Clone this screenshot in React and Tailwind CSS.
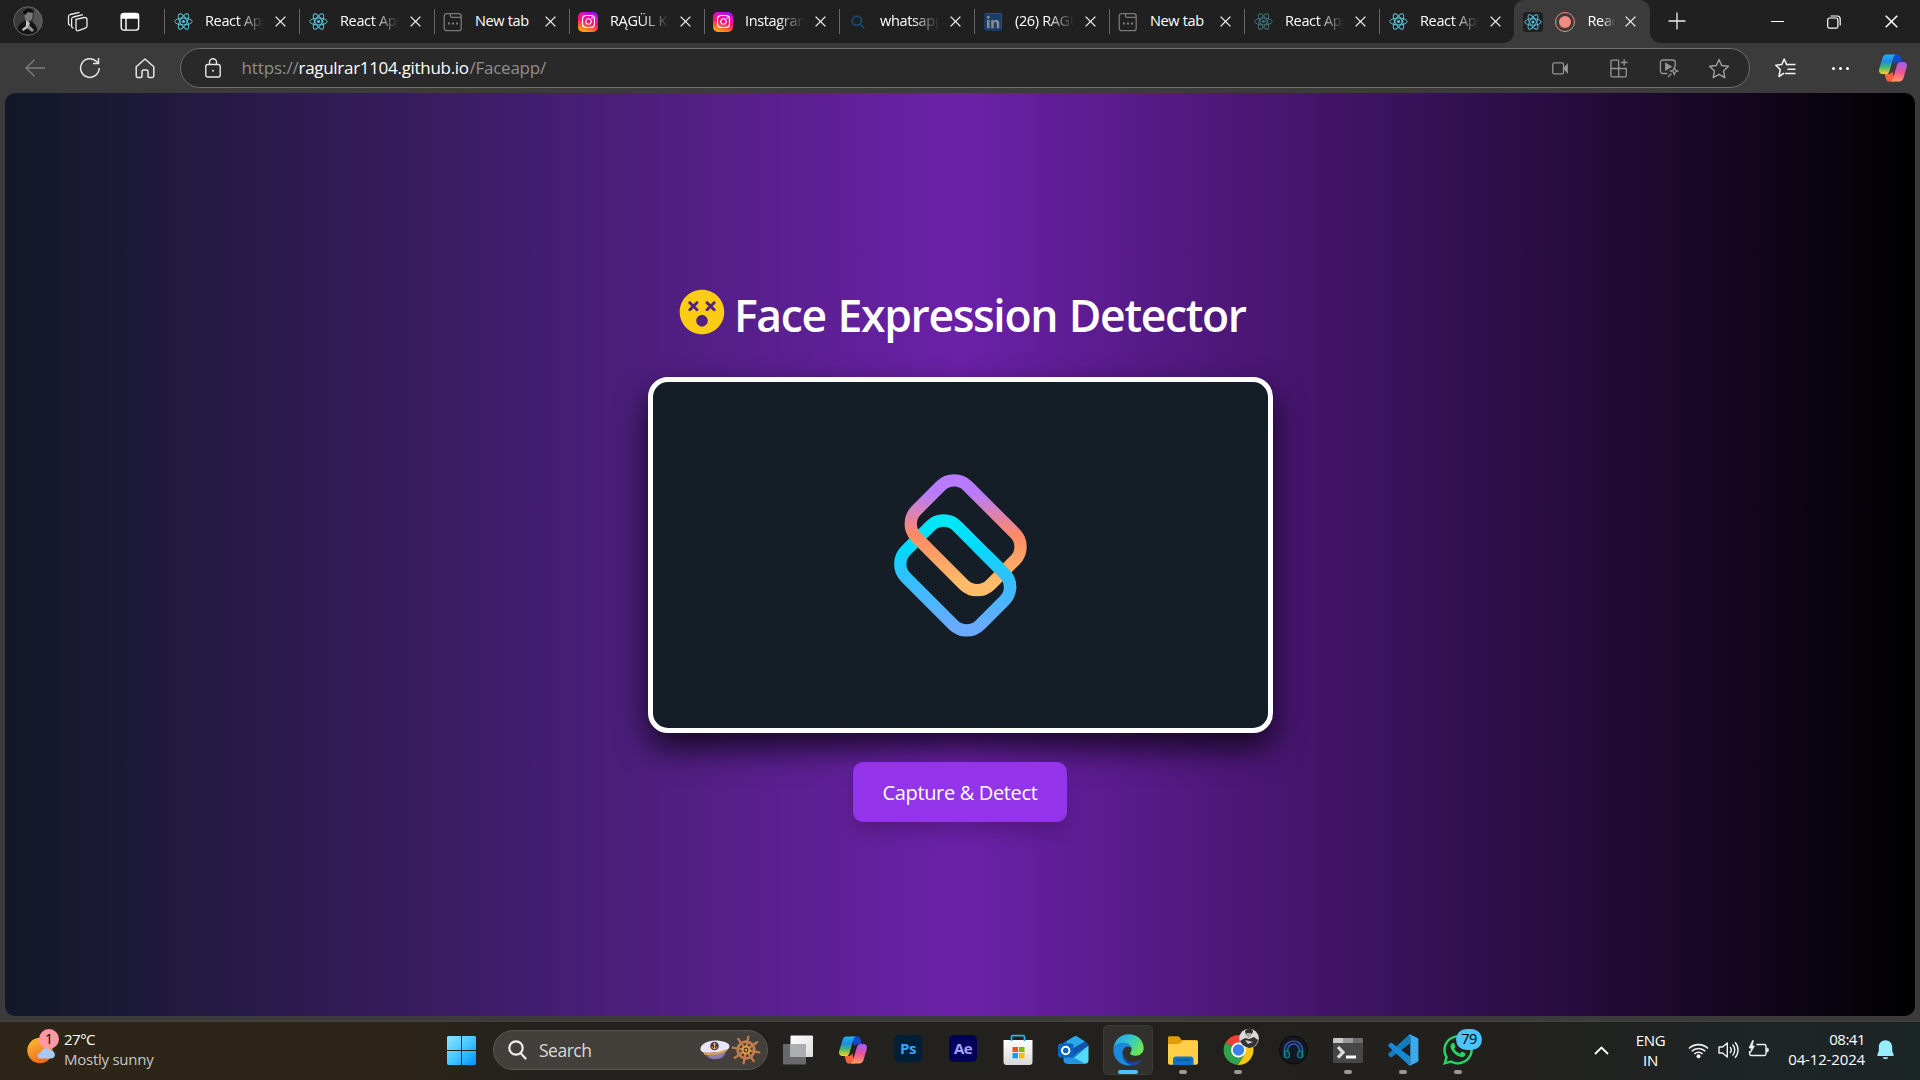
import React from "react";
import { FaDizzy, FaInstagram, FaLinkedin, FaWhatsapp } from "react-icons/fa";

function ReactLogo({ size = 19, dim = false }) {
  return (
    <svg width={size} height={size} viewBox="0 0 24 24" fill="none" stroke="#58c4dc" strokeWidth="1.25" className={dim ? "opacity-50" : ""}>
      <ellipse cx="12" cy="12" rx="11" ry="4.3" />
      <ellipse cx="12" cy="12" rx="11" ry="4.3" transform="rotate(60 12 12)" />
      <ellipse cx="12" cy="12" rx="11" ry="4.3" transform="rotate(120 12 12)" />
      <circle cx="12" cy="12" r="2" fill="#58c4dc" stroke="none" />
    </svg>
  );
}

function NewTabIcon() {
  return (
    <svg width="20" height="20" viewBox="0 0 20 20" fill="none" stroke="#7a7a7a" strokeWidth="1.3">
      <rect x="1.2" y="1.7" width="17" height="17" rx="2.5" />
      <path d="M7.5 1.7v2.2c0 .8.6 1.4 1.4 1.4h9.3" />
      <path d="M5 11.5h2M9 11.5h2M13 11.5h2" strokeWidth="1.8" />
    </svg>
  );
}

function InstagramIcon() {
  return (
    <span className="flex h-5 w-5 items-center justify-center rounded-[5px] bg-[linear-gradient(20deg,#ffc800_0%,#ff7a1c_22%,#ff0f6f_50%,#f20cc0_72%,#7a10ff_100%)]">
      <FaInstagram size={15} color="#fff" />
    </span>
  );
}

function SearchBlue() {
  return (
    <svg width="14" height="14" viewBox="0 0 14 14" fill="none" stroke="#174a78" strokeWidth="1.7">
      <circle cx="5.8" cy="5.8" r="4.6" />
      <path d="M9.2 9.2l4 4" />
    </svg>
  );
}

function CloseX({ size = 11, color = "#f2f2f2" }) {
  return (
    <svg width={size} height={size} viewBox="0 0 11 11" stroke={color} strokeWidth="1.3">
      <path d="M.6.6l9.8 9.8M10.4.6L.6 10.4" />
    </svg>
  );
}

const tabs = [
  { icon: <ReactLogo />, label: "React App" },
  { icon: <ReactLogo />, label: "React App" },
  { icon: <NewTabIcon />, label: "New tab" },
  { icon: <InstagramIcon />, label: "RĄGÜL KU" },
  { icon: <InstagramIcon />, label: "Instagram" },
  { icon: <SearchBlue />, label: "whatsapp" },
  { icon: <span className="flex h-[17px] w-[17px] items-center justify-center rounded-[2px] bg-[#848a90]"><FaLinkedin size={20} color="#173f68" className="shrink-0" /></span>, label: "(26) RAGUL" },
  { icon: <NewTabIcon />, label: "New tab" },
  { icon: <ReactLogo dim />, label: "React App" },
  { icon: <ReactLogo />, label: "React App" },
];

const FADE = "[mask-image:linear-gradient(to_right,#000_55%,transparent_100%)]";

function Tab({ icon, label }) {
  return (
    <div className="flex h-[43px] w-[135px] shrink-0 items-center">
      <span className="h-[25px] w-px bg-[#686868]" />
      <span className="ml-[8.5px] flex w-5 justify-center">{icon}</span>
      <span className={`mb-[2px] ml-[12px] w-[59px] overflow-hidden whitespace-nowrap text-[14.5px] leading-5 tracking-[-0.35px] text-white ${label === "New tab" ? "" : FADE}`}>{label}</span>
      <span className="ml-[10.5px]"><CloseX /></span>
    </div>
  );
}

function Slot({ className = "", children }) {
  return <div className={`flex h-full shrink-0 items-center justify-center ${className}`}>{children}</div>;
}

function TabBar() {
  return (
    <div className="flex h-[43px] bg-[#202020]">
      <div className="flex w-[163.5px] shrink-0 items-center">
        <svg width="30" height="30" viewBox="0 0 30 30" className="mb-[2px] ml-[13px]">
          <defs><clipPath id="avatar"><circle cx="15" cy="15" r="14.3" /></clipPath></defs>
          <g clipPath="url(#avatar)">
            <rect width="30" height="30" fill="#3a3a3a" />
            <path d="M22 0h8v30h-7l-3-14z" fill="#555" />
            <path d="M3 30c0-8 4-14 9-15l7 1c4 2 6 7 6 14z" fill="#151515" />
            <path d="M11 5c2-3 8-3 9 1l-1 7-4 3-3-3z" fill="#777" />
            <path d="M10 7c1-6 10-6 11 0l-6-1-3 3z" fill="#0c0c0c" />
            <path d="M13 14l4 3-2 5-5 3-1-2 4-3z" fill="#c0c0c0" />
            <path d="M16 19l5 5-2 2-5-4z" fill="#929292" />
          </g>
          <circle cx="15" cy="15" r="14.2" fill="none" stroke="#676767" />
        </svg>
        <svg width="22" height="22" viewBox="0 0 22 22" fill="none" stroke="#ececec" strokeWidth="1.3" className="ml-[24px]">
          <path d="M9 8.3l8.2-1.8c1.5-.3 2.8.6 2.8 2v6.6c0 1-.7 1.7-1.6 2l-7 2.6c-1.3.4-2.4-.3-2.4-1.6z" />
          <path d="M6.5 16.8c-1.2.1-1.9-.6-1.9-1.7V8.2c0-1 .7-1.9 1.7-2.2l9.6-2.3M3.5 14.2c-1.2.1-2-.6-2-1.7V5.7c0-1.1.7-1.9 1.7-2.2l9.3-2.2" />
        </svg>
        <svg width="20" height="20" viewBox="0 0 20 20" fill="none" stroke="#fff" strokeWidth="1.4" className="ml-[31px]">
          <rect x="1.2" y="1.5" width="17.4" height="16.6" rx="2.5" />
          <path d="M1.5 2.5h16.8v3.5H1.5zM6 6v12" fill="#fff" />
        </svg>
      </div>
      {tabs.map((t, i) => <Tab key={i} {...t} />)}
      <div className="relative flex w-[136px] shrink-0 items-center rounded-t-[10px] bg-[#3b3b3b]">
        <span className="absolute bottom-0 -left-[10px] h-[10px] w-[10px] bg-[radial-gradient(circle_at_0_0,#202020_9.5px,#3b3b3b_10px)]" />
        <span className="absolute -right-[10px] bottom-0 h-[10px] w-[10px] bg-[radial-gradient(circle_at_100%_0,#202020_9.5px,#3b3b3b_10px)]" />
        <span className="ml-[9px] flex h-5 w-5 items-center justify-center rounded-[3px] bg-[#202020]"><ReactLogo size={18} /></span>
        <span className="ml-[12px] flex h-5 w-5 items-center justify-center rounded-full border-[1.5px] border-[#f28b82]"><span className="h-3 w-3 rounded-full bg-[#f28b82]" /></span>
        <span className="mb-[2px] ml-[13px] w-[27px] overflow-hidden whitespace-nowrap text-[14.5px] leading-5 tracking-[-0.35px] text-white [mask-image:linear-gradient(to_right,#000_55%,transparent_100%)]">React</span>
        <span className="ml-[10px]"><CloseX /></span>
      </div>
      <Slot className="w-[54px] pb-[1px]">
        <svg width="18" height="18" viewBox="0 0 18 18" stroke="#eee" strokeWidth="1.3"><path d="M9 .5v17M.5 9h17" /></svg>
      </Slot>
      <div className="ml-auto flex">
        <Slot className="w-[55px]"><span className="h-px w-[13px] bg-white" /></Slot>
        <Slot className="w-[57px]">
          <svg width="14" height="14" viewBox="0 0 14 14" fill="none" stroke="#fff" strokeWidth="1.2">
            <rect x=".7" y="3" width="10.2" height="10.2" rx="1.8" />
            <path d="M3.5 1h6.700c1.700 0 3 1.300 3 3v6.500" />
          </svg>
        </Slot>
        <Slot className="w-[58px]"><CloseX size={13} color="#fff" /></Slot>
      </div>
    </div>
  );
}

function CopilotIcon() {
  return (
    <svg width="30" height="30" viewBox="0 0 30 30">
      <defs>
        <linearGradient id="cpA" x1="0" y1="0" x2="0" y2="1"><stop offset="0" stopColor="#1fb4f5" /><stop offset=".35" stopColor="#2088e6" /><stop offset=".65" stopColor="#45b873" /><stop offset="1" stopColor="#ffd21f" /></linearGradient>
        <linearGradient id="cpB" x1=".3" y1="0" x2=".2" y2="1"><stop offset="0" stopColor="#a35cf0" /><stop offset=".5" stopColor="#ef5593" /><stop offset="1" stopColor="#ffa35c" /></linearGradient>
      </defs>
      <path d="M13 1.5h6.500c1.600 0 2.400 1 2.900 2.600L24 9h-4c-2 0-3 .8-3.600 2.500z" fill="#1547d1" />
      <path d="M17 28.500h-6c-1.600 0-2.500-1-3-2.600L6.500 21H11c1.600 0 2.600-1 3.200-2.700z" fill="#f8633f" />
      <path d="M8.500 1.500H18c-1.500.5-2.200 1.700-2.700 3.400l-4 13.500c-.5 1.700-1.600 2.600-3.300 2.600H4.500C1.700 21 .5 18.600 1.200 16L4.500 5C5.200 2.700 6.400 1.500 8.500 1.500z" fill="url(#cpA)" />
      <path d="M21.500 28.500H12.500c1.500-.5 2.100-1.700 2.600-3.400l4-13.500C19.600 9.900 20.700 9 22.400 9h3.100c2.800 0 4 2.400 3.300 5l-3.300 11c-.7 2.300-1.900 3.500-4 3.500z" fill="url(#cpB)" />
    </svg>
  );
}

function Toolbar() {
  return (
    <div className="flex h-[50px] items-center bg-[#3b3b3b] pl-[7.5px]">
      <Slot className="w-[55px]">
        <svg width="20" height="18" viewBox="0 0 20 18" fill="none" stroke="#7c7c7c" strokeWidth="1.5"><path d="M20 9H1M9.500.7L1 9l8.500 8.300" /></svg>
      </Slot>
      <Slot className="w-[55px]">
        <svg width="22" height="22" viewBox="0 0 22 22" fill="none" stroke="#e6e6e6" strokeWidth="1.5"><path d="M20.200 11a9.300 9.300 0 1 1-2.700-6.500l1.700 1.700M19.500 1v5.500H14" /></svg>
      </Slot>
      <Slot className="w-[55px]">
        <svg width="20" height="21" viewBox="0 0 20 21" fill="none" stroke="#e6e6e6" strokeWidth="1.5" strokeLinejoin="round"><path d="M1.200 8.800L10 1l8.800 7.800V18c0 .9-.5 1.400-1.400 1.400h-3.200c-.8 0-1.200-.5-1.200-1.200v-4.700c0-.9-.5-1.400-1.400-1.400H8.400c-.9 0-1.400.5-1.400 1.400v4.700c0 .7-.4 1.200-1.200 1.200H2.600c-.9 0-1.400-.5-1.400-1.400z" /></svg>
      </Slot>
      <div className="ml-[7.5px] flex h-10 w-[1570px] shrink-0 items-center rounded-full border border-[#6c6c6c] bg-[#292929]">
        <svg width="16" height="20" viewBox="0 0 16 20" fill="none" stroke="#e6e6e6" strokeWidth="1.4" className="mb-[1px] ml-[23.5px]">
          <rect x=".8" y="6.500" width="14.400" height="12.500" rx="2" /><path d="M4.500 6.500V4.300a3.500 3.500 0 0 1 7 0v2.200" /><circle cx="8" cy="12.700" r="1" fill="#e6e6e6" stroke="none" />
        </svg>
        <span className="ml-[21px] flex whitespace-nowrap text-[17px] leading-6 text-[#8f8f8f]">
          <span className="w-[57px] tracking-[-0.1px]">https://</span>
          <span className="w-[171px] tracking-[-0.3px] text-white">ragulrar1104.github.io</span>
          <span className="tracking-[-0.25px]">/Faceapp/</span>
        </span>
        <div className="ml-auto flex h-full pr-[5px]">
          <Slot className="w-[67px]">
            <svg width="16" height="13" viewBox="0 0 16 13" fill="none" stroke="#959595" strokeWidth="1.3"><rect x=".8" y=".9" width="10.700" height="11" rx="1.500" /><path d="M12 6.500l3.200-3.700v7.400z" fill="#959595" /></svg>
          </Slot>
          <Slot className="w-[51px]">
            <svg width="18" height="19" viewBox="0 0 18 19" fill="none" stroke="#959595" strokeWidth="1.3"><path d="M8.700 1.200H2.200c-.8 0-1.300.5-1.300 1.300v14c0 .8.500 1.300 1.300 1.300H15c.8 0 1.300-.5 1.300-1.300V9.500H.9M8.700 1.200v16.600M14.200.3v6.400M11 3.500h6.500" /></svg>
          </Slot>
          <Slot className="w-[50px]">
            <svg width="20" height="20" viewBox="0 0 20 20" fill="none" stroke="#959595" strokeWidth="1.3"><path d="M8.500 15.500H4A2.600 2.600 0 0 1 1.400 13V4.400C1.400 3 2.500 2 4 2h9.700c1.400 0 2.500 1 2.500 2.400V9" /><path d="M6.800 5.500v6.300L12 8.700z" fill="#959595" /><path d="M15.300 9.500l1 2.500 2.700 1-2.700 1-1 2.500-1-2.500-2.700-1 2.700-1zM12.500 15.500L9 19" /></svg>
          </Slot>
          <Slot className="w-[50px]">
            <svg width="22" height="21" viewBox="0 0 22 21" fill="none" stroke="#a0a0a0" strokeWidth="1.4" strokeLinejoin="round"><path d="M11 1.500l2.700 6 6.800.8-5 4.600 1.300 6.700L11 16.300l-5.800 3.300 1.300-6.700-5-4.600 6.800-.8z" /></svg>
          </Slot>
        </div>
      </div>
      <Slot className="ml-[8px] w-[55px]">
        <svg width="21" height="20" viewBox="0 0 21 20" fill="none" stroke="#f4f4f4" strokeWidth="1.5" strokeLinejoin="round"><path d="M13.500 6.800l-1.800-.2L9.200 1 6.700 6.600.8 7.300l4.400 4.200L4 18.500l5-3.300M12 6.600h8.500M12.500 11.200h8M10 15.600h10.500" /></svg>
      </Slot>
      <Slot className="w-[54px] gap-1">
        <span className="h-[3px] w-[3px] rounded-full bg-white" /><span className="h-[3px] w-[3px] rounded-full bg-white" /><span className="h-[3px] w-[3px] rounded-full bg-white" />
      </Slot>
      <Slot className="w-[51px]"><CopilotIcon /></Slot>
    </div>
  );
}

function LoopsLogo() {
  const lower = <g transform="translate(285 376) rotate(45)"><rect x="-158" y="-109" width="316" height="218" rx="57" stroke="url(#cool)" /></g>;
  return (
    <svg width="133" height="163" viewBox="101 71 400 490" fill="none" strokeWidth="37">
      <defs>
        <linearGradient id="warm" gradientUnits="userSpaceOnUse" x1="-129" y1="-129" x2="129" y2="129">
          <stop offset=".08" stopColor="#b87aff" /><stop offset=".16" stopColor="#b87cfa" /><stop offset=".5" stopColor="#ff8a65" /><stop offset=".9" stopColor="#ffbd6a" />
        </linearGradient>
        <linearGradient id="cool" gradientUnits="userSpaceOnUse" x1="-129" y1="-129" x2="129" y2="129">
          <stop offset=".05" stopColor="#00e7f5" /><stop offset=".25" stopColor="#00dcfc" /><stop offset=".52" stopColor="#30c0ff" /><stop offset=".92" stopColor="#6aaaff" />
        </linearGradient>
        <clipPath id="overlap"><path d="M300 300h200v120H300z" /></clipPath>
      </defs>
      {lower}
      <g transform="translate(316.5 255) rotate(45)"><rect x="-158" y="-109" width="316" height="218" rx="57" stroke="url(#warm)" /></g>
      <g clipPath="url(#overlap)">{lower}</g>
    </svg>
  );
}

function Page() {
  return (
    <div className="mx-[5px] flex h-[923px] flex-col items-center overflow-hidden rounded-[10px] bg-[linear-gradient(to_right,#111827,#6b21a8,#000)] pt-[190px]">
      <div className="flex h-[63px] items-center">
        <FaDizzy size={46} color="#facc15" className="mt-[-5px] ml-[1px]" />
        <h1 className="ml-[9px] w-[508px] whitespace-nowrap text-[44.5px] leading-[56px] font-semibold tracking-[-1.35px] [word-spacing:1.5px] text-white">Face Expression Detector</h1>
      </div>
      <div className="mt-[31px] flex h-[356px] w-[625px] shrink-0 items-center justify-center rounded-[20px] border-[5px] border-white bg-[#151d26] shadow-[0_15px_32px_0_rgba(0,0,0,0.75)]">
        <LoopsLogo />
      </div>
      <button className="mt-[29px] h-[60px] w-[214px] shrink-0 rounded-[10px] bg-[#9333ea] pt-[2px] text-[20px] tracking-[-0.35px] whitespace-nowrap text-white shadow-[0_12px_19px_-4px_rgba(0,0,0,0.2)]">Capture &amp; Detect</button>
    </div>
  );
}

function StartIcon() {
  return (
    <svg width="29" height="29" viewBox="0 0 29 29">
      <defs><linearGradient id="win" gradientUnits="userSpaceOnUse" x1="0" y1="0" x2="29" y2="29"><stop offset="0" stopColor="#8ce5ff" /><stop offset=".5" stopColor="#45c8ff" /><stop offset="1" stopColor="#0091ff" /></linearGradient></defs>
      <path d="M1 0h13v14H0V1zM15 0h13l1 1v13H15zM0 15h14v14H1l-1-1zM15 15h14v13l-1 1H15z" fill="url(#win)" />
    </svg>
  );
}

function SearchBox() {
  return (
    <div className="ml-[4.5px] flex h-10 w-[275px] shrink-0 items-center rounded-full border border-[#5b5853] bg-[#433f3a]">
      <svg width="19" height="20" viewBox="0 0 19 20" fill="none" stroke="#eee" strokeWidth="2.2" strokeLinecap="round" className="ml-[14px]"><circle cx="8" cy="8" r="6.700" /><path d="M12.800 13.300l4.700 5.200" /></svg>
      <span className="ml-[12px] w-[54px] text-[17.5px] leading-6 tracking-[-0.5px] text-[#dad9d7]">Search</span>
      <svg width="30" height="20" viewBox="0 0 30 20" className="ml-[107px]">
        <path d="M4 12l22-4c2 7-3 11.500-10 11.500S4.500 17 4 12z" fill="#5d4b86" />
        <path d="M7 15c7-1 14-2 18.500-5.500C26 16 20 19 15 19c-4 0-7-1.500-8-4z" fill="#8f7db0" />
        <path d="M.5 10C-.5 5 7 .5 15 .5S30 3 29.500 6.500C29 10 24 12.500 15 12.500S3 14 .5 10z" fill="#eae4f6" />
        <path d="M3.500 12.500c7 1 16 .5 23.500-3.500l-.3 2.300C19 15 11 15.500 4 14.400z" fill="#d9a23c" />
        <circle cx="14.500" cy="6" r="4.300" fill="#4b3452" />
        <path d="M14.500 2.500v6.500M12 6.500c.5 3 4.500 3 5 0M13 4h3" stroke="#e8b24c" fill="none" />
      </svg>
      <svg width="30" height="30" viewBox="-15 -15 30 30" fill="none" stroke="#c27b4e" strokeWidth="2.3" strokeLinecap="round" className="ml-[1px]">
        <g transform="rotate(10)">
          <path d="M0-13.500v27M-13.500 0h27M-9.600-9.600l19.200 19.200M9.600-9.600L-9.600 9.600" />
          <circle r="8.300" strokeWidth="2.800" /><circle r="3.500" fill="#594129" stroke="#e5a03c" strokeWidth="2" /><circle r="1" fill="#f1cb60" stroke="none" />
        </g>
      </svg>
    </div>
  );
}

function TaskViewIcon() {
  return (
    <svg width="30" height="30" viewBox="0 0 30 30">
      <defs><linearGradient id="tv" x1="0" y1="0" x2="1" y2="1"><stop stopColor="#fff" /><stop offset="1" stopColor="#ddd" /></linearGradient></defs>
      <rect x="0" y="9" width="23" height="20.500" rx="1" fill="#68696a" />
      <rect x="7.500" y=".5" width="22.500" height="21.500" rx="1" fill="url(#tv)" />
      <path d="M7.500 9H23v13H7.500z" fill="#adaeaf" />
    </svg>
  );
}

function AdobeIcon({ label, className }) {
  return <span className={`mb-[3px] flex h-[27px] w-[28px] items-center justify-center rounded-[5px] pb-[1px] text-[15px] leading-none font-bold tracking-[-0.5px] ${className}`}>{label}</span>;
}

function StoreIcon() {
  return (
    <svg width="30" height="32" viewBox="0 0 30 32">
      <defs><linearGradient id="store" x1="0" y1="0" x2="0" y2="1"><stop stopColor="#fff" /><stop offset="1" stopColor="#d8d8d8" /></linearGradient></defs>
      <path d="M.5 6h29v22c0 1.900-1.100 3-3 3h-23c-1.900 0-3-1.100-3-3z" fill="url(#store)" />
      <path d="M8.500 7V3c0-.9.500-1.400 1.400-1.400h10.200c.9 0 1.400.5 1.400 1.400v4" fill="none" stroke="#25b4e6" strokeWidth="1.700" />
      <path d="M9.500 13H15v5H9.500z" fill="#f25022" /><path d="M16 13h5.500v5H16z" fill="#7fba00" /><path d="M9.500 19H15v5.300H9.500z" fill="#00a4ef" /><path d="M16 19h5.500v5.300H16z" fill="#ffb900" />
    </svg>
  );
}

function OutlookIcon() {
  return (
    <svg width="31" height="28" viewBox="0 0 31 28">
      <path d="M5 7L16 .5c1-.6 2-.6 3 0L28.500 7v10L12 23 5 18z" fill="#1478ce" />
      <path d="M17 .3c1-.5 1.500-.2 2 .2L27 5.500 14 15l-5-3V5z" fill="#29a9ea" />
      <path d="M27 5.500c2 1.300 3.500 2 3.500 4L14 20l-4-5z" fill="#1252ab" />
      <path d="M30.500 9.500V24c0 2.500-1.200 3.800-3.800 3.800H9z" fill="#55d9f8" />
      <path d="M9 18l18.500 9.700H9.500c-2.700 0-4-1.400-4-4V19z" fill="#2193e6" />
      <rect x="0" y="7.500" width="15.500" height="14" rx="2" fill="#0a63bf" />
      <circle cx="7.700" cy="14.500" r="3.700" fill="none" stroke="#fff" strokeWidth="2" />
    </svg>
  );
}

function EdgeIcon() {
  return (
    <svg width="31" height="32" viewBox="0 0 31 32">
      <defs>
        <linearGradient id="edTop" x1="0" y1="0" x2="1" y2=".5"><stop stopColor="#299be5" /><stop offset=".5" stopColor="#30c4d2" /><stop offset="1" stopColor="#6be655" /></linearGradient>
        <linearGradient id="edSide" x1="0" y1="0" x2=".6" y2="1"><stop stopColor="#1a85d4" /><stop offset="1" stopColor="#1c8de5" /></linearGradient>
      </defs>
      <path d="M.5 14C1.500 6 7.500.3 15.500.3 24.500.3 30.700 6.500 30.700 14c0 4.700-3.600 7.700-8 7.700-3.200 0-5.700-1.200-5.700-2.500 0-.8 1.600-1.500 1.600-4 0-3.300-3.200-5.900-7.500-5.900C6.500 9.300 2.600 11 .5 14z" fill="url(#edTop)" />
      <path d="M.3 16C.3 11.300 5 8.700 10.500 8.700c4.800 0 8.100 3 8.100 6-1-2-3-2.600-5-2.200-3 .7-4.400 4.500-3.400 8.500C11.500 26.500 16 30 21 30.500c-2 .9-4 1.300-6 1C6.300 31 .3 24 .3 16z" fill="url(#edSide)" />
      <path d="M11.500 13.500c-2.500 3.500-1.800 9.500 2 12.500 4.500 3.500 10 2.500 14 .2.900-.5 1.300 0 .8.700-2.100 2.700-5.100 4.400-8.300 4.500C13 30.800 9 25 9.300 19.500c.1-2.500 1-4.700 2.200-6z" fill="#134ca0" />
    </svg>
  );
}

function FolderIcon() {
  return (
    <svg width="30" height="29" viewBox="0 0 30 29">
      <path d="M0 2C0 .8.700.3 2 .3h7.500c1 0 1.700.4 2.300 1.200L13.500 4H28c1.300 0 2 .7 2 2v8H0z" fill="#e19d08" />
      <path d="M0 9.500C0 8.500.5 8 1.500 8H10c1 0 1.700-.3 2.300-1l2-1.700c.5-.5 1-.8 2-.8H28c1.400 0 2 .6 2 2v20.300c0 1.300-.7 2-2 2H2c-1.300 0-2-.7-2-2z" fill="#ffcf48" />
      <path d="M5 29v-5.500c0-2 1-3 3-3h14.500c2 0 3 1 3 3V29z" fill="#0f74c8" /><path d="M8.500 24h13.500" stroke="#074b8b" strokeWidth="1.200" />
    </svg>
  );
}

function ChromeIcon() {
  return (
    <span className="relative block h-8 w-[31px]">
      <svg width="31" height="32" viewBox="0 0 32 32">
        <path d="M16 16L2.600 8.300A15.500 15.500 0 0 1 29.400 8.300z" fill="#e74235" />
        <path d="M16 16L2.600 8.300A15.500 15.500 0 0 0 15.500 31.500L22.500 19.500z" fill="#2fa24d" />
        <path d="M16 8.300h13.400A15.500 15.500 0 0 1 15.500 31.500L22.700 19.500z" fill="#fbc613" />
        <circle cx="16" cy="16" r="7.700" fill="#fff" /><circle cx="16" cy="16" r="5.900" fill="#3a7ff0" />
      </svg>
      <svg width="20" height="21" viewBox="0 0 20 21" className="absolute -top-[6px] left-[16px]">
        <circle cx="10" cy="10.500" r="9.800" fill="#d9dbdb" />
        <path d="M6 3c2-3 7-3 8 0l-1 3-3-1-3 2z" fill="#2c2c2c" />
        <path d="M7.500 5l4 0 1 3-3 2-2-2z" fill="#b3a5a2" />
        <path d="M1 13l5-3 4 1 5-2 4 3c-1 5-5 8-9 8-4-1-7-3-9-7z" fill="#343434" />
        <path d="M6 12l8 2-5 2zM3 15l3 2" fill="#c9c9c9" />
      </svg>
    </span>
  );
}

function HeadphonesIcon() {
  return (
    <svg width="29" height="30" viewBox="0 0 29 30">
      <defs><linearGradient id="hp" x1="0" y1="0" x2="0" y2="1"><stop stopColor="#3148b9" /><stop offset="1" stopColor="#078b91" /></linearGradient></defs>
      <circle cx="14.500" cy="15" r="14" fill="#14171d" stroke="#08090b" />
      <path d="M5.500 22v-7a9 9 0 0 1 18 0v7M8.700 16v-1.300a5.800 5.800 0 0 1 11.600 0V16" fill="none" stroke="url(#hp)" strokeWidth="1.700" />
      <path d="M6 16.500c3-1 4.500 0 4.500 3S9 23.500 6 22.500zM23 16.500c-3-1-4.500 0-4.500 3s1.500 4 4.500 3z" fill="#102c39" stroke="#08858d" strokeWidth="1.300" />
    </svg>
  );
}

function TerminalIcon() {
  return (
    <svg width="30" height="25" viewBox="0 0 30 25">
      <rect width="30" height="25" rx="1.500" fill="#474747" /><path d="M0 1.500C0 .5.500 0 1.500 0H10v5H0z" fill="#c9c9c9" /><path d="M10 0h10v5H10z" fill="#999" /><path d="M20 0h8.500c1 0 1.500.5 1.500 1.500V5H20z" fill="#6c6c6c" />
      <path d="M5 9l5 5.300-5 5.300" fill="none" stroke="#dedede" strokeWidth="3.200" /><path d="M13 19h10" stroke="#fff" strokeWidth="3" />
    </svg>
  );
}

function CodeIcon() {
  return (
    <svg width="31" height="32" viewBox="0 0 31 32">
      <path d="M22 .5v9L4 23c-.6.5-1.200.5-1.700 0L.5 21.300c-.5-.5-.5-1.200 0-1.700L21 .8z" fill="#157bc0" />
      <path d="M22 31.500v-9L4 9c-.6-.5-1.200-.5-1.700 0L.5 10.700c-.5.500-.5 1.200 0 1.700L21 31.200z" fill="#1689d2" />
      <path d="M20.500 1.500c.7-.9 1.400-1.100 2.300-.7L29 3.700c.9.4 1.400 1.100 1.400 2v20.600c0 .9-.5 1.600-1.400 2l-6.200 2.900c-.9.4-1.600.2-2.300-.7 1 .4 1.800-.2 1.800-1.300V2.800c0-1.100-.8-1.700-1.800-1.300z" fill="#3babf0" />
    </svg>
  );
}

function WhatsAppIcon() {
  return (
    <span className="relative block">
      <FaWhatsapp size={34} color="#25d366" />
      <span className="absolute -top-[4px] left-[15px] flex h-[21px] w-[26px] items-center justify-center rounded-full bg-[#4cc2ff] text-[14.5px] leading-none tracking-[-0.5px] text-black">79</span>
    </span>
  );
}

const apps = [
  { el: <TaskViewIcon /> },
  { el: <CopilotIcon /> },
  { el: <AdobeIcon label="Ps" className="bg-[#001e36] text-[#31a8ff]" /> },
  { el: <AdobeIcon label="Ae" className="bg-[#00005b] text-[#a5a3ff]" /> },
  { el: <StoreIcon /> },
  { el: <OutlookIcon /> },
  { el: <EdgeIcon />, active: true },
  { el: <FolderIcon />, open: true },
  { el: <ChromeIcon />, open: true },
  { el: <HeadphonesIcon /> },
  { el: <TerminalIcon />, open: true },
  { el: <CodeIcon />, open: true },
  { el: <WhatsAppIcon />, open: true },
];

function Taskbar() {
  return (
    <div className="flex h-[59px] items-center border-t border-[#46433d] bg-[linear-gradient(to_right,#2d2618_0%,#2d2418_20%,#24221e_28%,#22201c_78%,#1d2526_92%,#1c2526_100%)] pb-[2px]">
      <div className="flex w-[433.5px] shrink-0 items-center">
        <span className="relative mb-[7px] ml-[27px] block h-[34px] w-[32px]">
          <svg width="30" height="34" viewBox="0 0 30 34">
            <defs><linearGradient id="sun" x1="0" y1="0" x2=".5" y2="1"><stop stopColor="#fbc13a" /><stop offset="1" stopColor="#f26a18" /></linearGradient></defs>
            <circle cx="13" cy="20.500" r="12.700" fill="url(#sun)" />
            <path d="M14 28.500c-4.500 0-4.800-5.500-.3-6 1.500-5.500 8.500-6 10.300-2 5 .3 5.500 8 0 8z" fill="#a9c8fa" />
          </svg>
          <span className="absolute -top-[1px] left-[12px] flex h-5 w-5 items-center justify-center rounded-full bg-[#ff99a4] text-[14px] leading-none text-black">1</span>
        </span>
        <span className="mb-[3px] ml-[5px] text-[15px] leading-5 whitespace-nowrap">
          <span className="block tracking-[-0.5px] text-white">27°C</span>
          <span className="block tracking-[-0.25px] text-[#c9c7c3]">Mostly sunny</span>
        </span>
      </div>
      <Slot className="w-[55px]"><StartIcon /></Slot>
      <SearchBox />
      <div className="ml-[2.5px] flex h-full">
        {apps.map((a, i) => (
          <div key={i} className="relative flex w-[55px] items-center justify-center">
            {a.active && <span className="absolute inset-x-[2.5px] inset-y-[3px] rounded-[5px] border border-[#3d3b38] bg-[#32302d]" />}
            <span className="relative flex">{a.el}</span>
            {a.active && <span className="absolute bottom-[4px] h-1 w-5 rounded-full bg-[#4cc2ff]" />}
            {a.open && <span className="absolute bottom-[4px] h-1 w-2 rounded-full bg-[#999]" />}
          </div>
        ))}
      </div>
      <div className="ml-auto flex h-full items-center text-[15px] leading-5 text-white">
        <svg width="15" height="9" viewBox="0 0 15 9" fill="none" stroke="#fff" strokeWidth="1.8" className="ml-px"><path d="M1 8l6.500-6.500L14 8" /></svg>
        <span className="mb-[1px] ml-[25.5px] w-[32px] text-center tracking-[-0.3px]">ENG<br />IN</span>
        <svg width="21" height="17" viewBox="0 0 21 17" fill="none" stroke="#f2f2f2" strokeWidth="1.6" className="ml-[21px]"><path d="M1 6.500a13.500 13.500 0 0 1 19 0M3.700 9.300a9.600 9.600 0 0 1 13.600 0M6.400 12a5.700 5.700 0 0 1 8.200 0" /><circle cx="10.500" cy="14.300" r="2" fill="#f2f2f2" stroke="none" /></svg>
        <svg width="21" height="18" viewBox="0 0 21 18" fill="none" stroke="#f2f2f2" strokeWidth="1.4" strokeLinejoin="round" className="ml-[9px]"><path d="M1 6v6h3.500L9.300 16V2L4.500 6zM12 6c1.500 1.700 1.500 4.300 0 6M14.500 3.500c3 3 3 8 0 11M17 1.200c4 4.300 4 11.300 0 15.600" /></svg>
        <svg width="21" height="18" viewBox="0 0 21 18" fill="none" stroke="#f2f2f2" strokeWidth="1.4" className="mb-[2px] ml-[9px]"><path d="M8.500 4.500h7.800c1 0 1.700.7 1.700 1.700v7.600c0 1-.7 1.700-1.700 1.700H3.300c-1 0-1.700-.7-1.700-1.700V11" /><path d="M4.500.5L1 8h2.300L2.500 13 6.500 6H4.300l1.200-5.500z" fill="#f2f2f2" strokeWidth=".6" /><path d="M18.500 8v4c1.800 0 2-.7 2-2s-.2-2-2-2z" fill="#f2f2f2" strokeWidth=".6" /></svg>
        <span className="mb-[3px] ml-[9.5px] w-[87px] text-right whitespace-nowrap"><span className="block tracking-[-0.5px]">08:41</span><span className="block tracking-[-0.15px]">04-12-2024</span></span>
        <svg width="17" height="20" viewBox="0 0 17 20" fill="#99ebff" className="mr-[26px] ml-[12px]"><path d="M8.500.3c-4 0-6.700 3-6.700 6.800v4L.3 14.800c-.2.700.1 1.200.8 1.200h14.800c.7 0 1-.5.800-1.200l-1.500-3.700v-4C15.200 3.300 12.500.3 8.500.3zM5.700 17.200h5.600a2.900 2.900 0 0 1-5.600 0z" /></svg>
      </div>
    </div>
  );
}

export default function App() {
  return (
    <div className="h-[1080px] w-[1920px] overflow-hidden bg-[#3b3b3b] font-['Open_Sans','Noto_Sans',sans-serif]">
      <TabBar />
      <Toolbar />
      <Page />
      <div className="h-[5px]" />
      <Taskbar />
    </div>
  );
}
